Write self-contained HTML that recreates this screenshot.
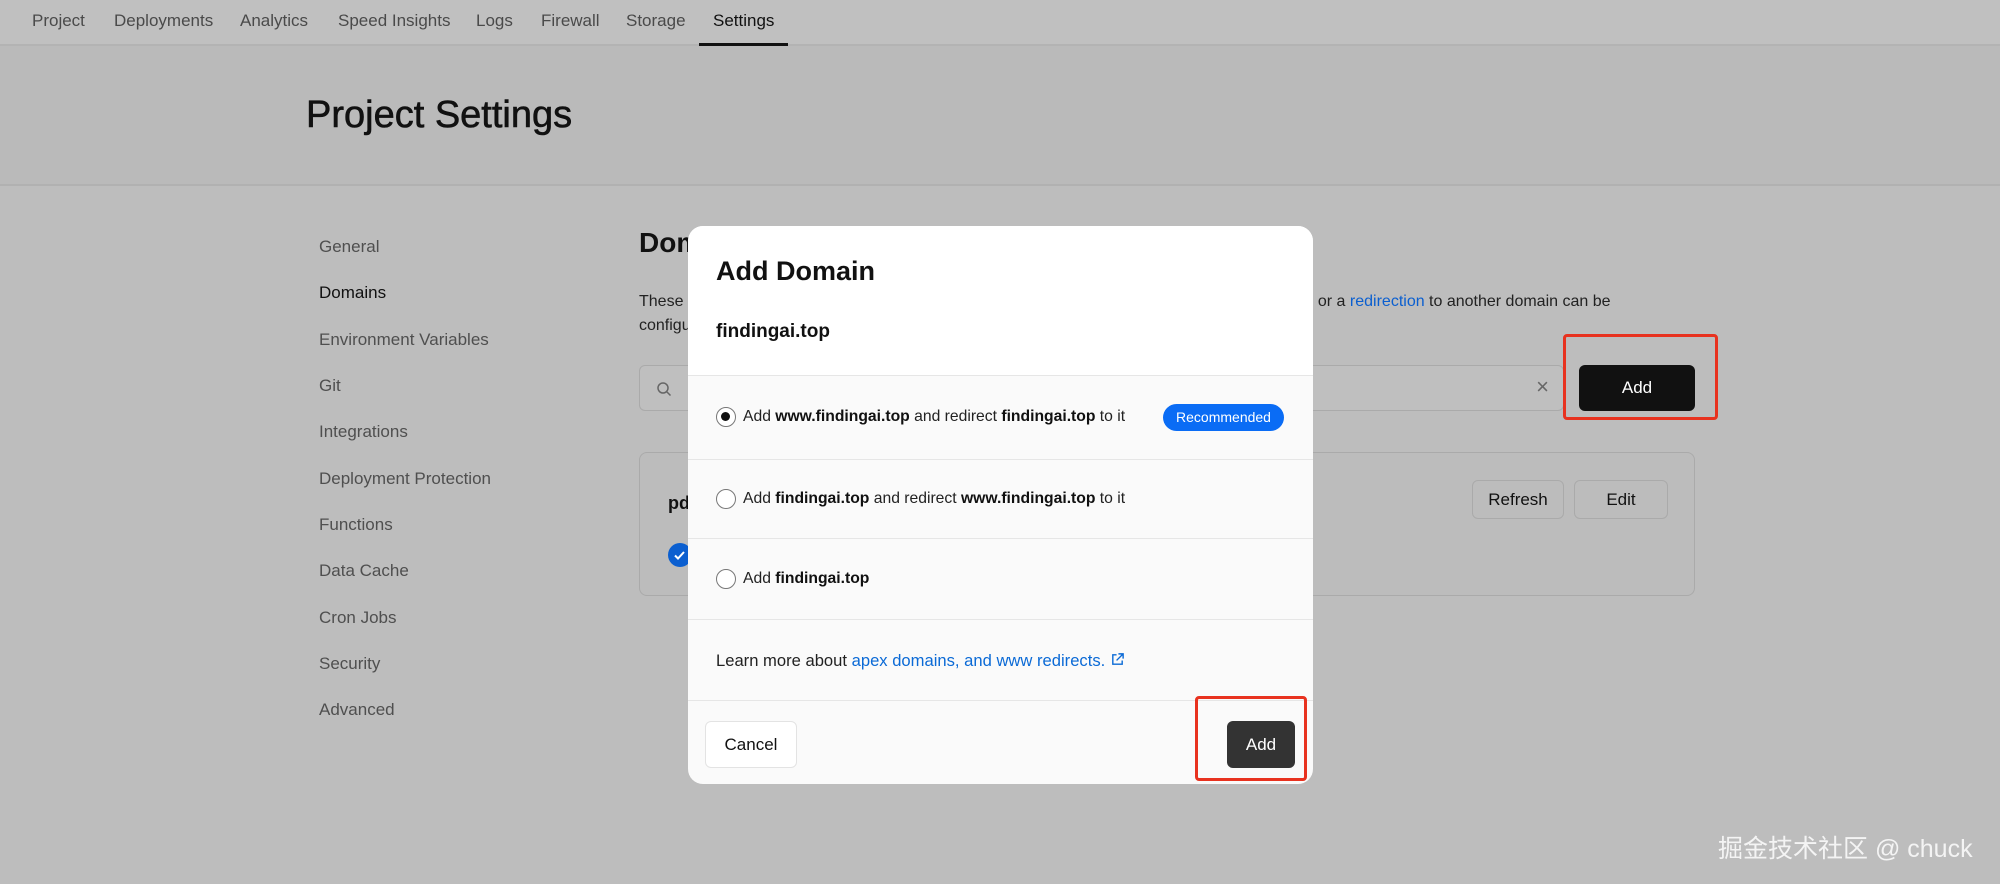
<!DOCTYPE html>
<html><head><meta charset="utf-8"><style>
*{box-sizing:border-box;margin:0;padding:0}
body{width:2000px;height:884px;overflow:hidden;background:#bdbdbd;font-family:"Liberation Sans",sans-serif;color:#111;position:relative}
.a{position:absolute;white-space:nowrap}
.nav{left:0;top:0;width:2000px;height:46px;background:#c0c0c0;border-bottom:2px solid #b3b3b3}
.nav span{position:absolute;top:11px;font-size:17px;color:#4a4a4a}
.hdr{left:0;top:46px;width:2000px;height:140px;background:#bababa;border-bottom:2px solid #b1b1b1}
.side{font-size:17px;color:#4f4f4f}
.modal{left:688px;top:226px;width:625px;height:558px;background:#fafafa;border-radius:15px;overflow:hidden}
.row{position:absolute;left:0;width:625px;border-top:1px solid #e6e6e6}
.radio{position:absolute;left:28px;width:20px;height:20px;border:1.5px solid #777;border-radius:50%;background:#fff}
.rt{position:absolute;left:55px;font-size:15.7px;color:#222}
b{font-weight:700;color:#111}
.red{border:3px solid #e8321f;border-radius:4px}
</style></head><body>
<div class="a nav">
<span style="left:32px">Project</span><span style="left:114px">Deployments</span><span style="left:240px">Analytics</span><span style="left:338px">Speed Insights</span><span style="left:476px">Logs</span><span style="left:541px">Firewall</span><span style="left:626px">Storage</span><span style="left:713px;color:#111">Settings</span>
<div style="position:absolute;left:699px;top:43px;width:89px;height:3px;background:#111"></div>
</div>
<div class="a hdr"><div class="a" style="left:306px;top:48px;font-size:38px;color:#111;-webkit-text-stroke:0.6px #111">Project Settings</div></div>
<div class="a side" style="left:319px;top:237px">General</div>
<div class="a side" style="left:319px;top:283px;color:#111">Domains</div>
<div class="a side" style="left:319px;top:330px">Environment Variables</div>
<div class="a side" style="left:319px;top:376px">Git</div>
<div class="a side" style="left:319px;top:422px">Integrations</div>
<div class="a side" style="left:319px;top:469px">Deployment Protection</div>
<div class="a side" style="left:319px;top:515px">Functions</div>
<div class="a side" style="left:319px;top:561px">Data Cache</div>
<div class="a side" style="left:319px;top:608px">Cron Jobs</div>
<div class="a side" style="left:319px;top:654px">Security</div>
<div class="a side" style="left:319px;top:700px">Advanced</div>
<div class="a" style="left:639px;top:227px;font-size:28px;font-weight:700">Domains</div>
<div class="a" style="left:639px;top:293px;font-size:16px;color:#222">These domains are assigned to your Production Deployments. Optionally, a different Git <span style="color:#0b5fd0">branch</span> or a <span style="color:#0b5fd0">redirection</span> to another domain can be</div>
<div class="a" style="left:639px;top:317px;font-size:16px;color:#222">configured for each one.</div>
<div class="a" style="left:639px;top:365px;width:925px;height:46px;border:1px solid #aaa;border-radius:6px;background:#bfbfbf">
<svg class="a" style="left:16px;top:15px" width="16" height="16" viewBox="0 0 16 16" fill="none" stroke="#666" stroke-width="1.5"><circle cx="7" cy="7" r="5"/><path d="M11 11l3.5 3.5"/></svg>
<span class="a" style="right:14px;top:8px;font-size:22px;color:#666">×</span></div>
<div class="a" style="left:1579px;top:365px;width:116px;height:46px;background:#111;border-radius:6px;color:#fff;font-size:17px;text-align:center;line-height:46px">Add</div>
<div class="a red" style="left:1563px;top:334px;width:155px;height:86px"></div>
<div class="a" style="left:639px;top:452px;width:1056px;height:144px;border:1px solid #aaa;border-radius:8px;background:#bcbcbc">
<div class="a" style="left:28px;top:40px;font-size:18px;font-weight:700">pdf.findingai.top</div>
<div class="a" style="left:28px;top:90px;width:24px;height:24px;border-radius:50%;background:#0b5fd0"><svg width="24" height="24" viewBox="0 0 24 24" fill="none" stroke="#fff" stroke-width="2"><path d="M7 12.5l3 3 6-6.5"/></svg></div>
<div class="a" style="left:832px;top:27px;width:92px;height:39px;border:1px solid #aaa;border-radius:6px;font-size:17px;text-align:center;line-height:37px">Refresh</div>
<div class="a" style="left:934px;top:27px;width:94px;height:39px;border:1px solid #aaa;border-radius:6px;font-size:17px;text-align:center;line-height:37px">Edit</div>
</div>
<div class="a modal">
<div style="position:absolute;left:0;top:0;width:625px;height:149px;background:#fff"></div>
<div class="a" style="left:28px;top:30px;font-size:27px;font-weight:700">Add Domain</div>
<div class="a" style="left:28px;top:95px;font-size:19px;font-weight:700">findingai.top</div>
<div class="row" style="top:149px;height:84px"><div class="radio" style="top:31px"><div style="position:absolute;left:4px;top:4px;width:9px;height:9px;border-radius:50%;background:#111"></div></div><div class="rt" style="top:32px">Add <b>www.findingai.top</b> and redirect <b>findingai.top</b> to it</div>
<div class="a" style="left:475px;top:28px;width:121px;height:27px;border-radius:14px;background:#0a6cf5;color:#fff;font-size:14px;text-align:center;line-height:27px">Recommended</div></div>
<div class="row" style="top:233px;height:79px"><div class="radio" style="top:29px"></div><div class="rt" style="top:30px">Add <b>findingai.top</b> and redirect <b>www.findingai.top</b> to it</div></div>
<div class="row" style="top:312px;height:81px"><div class="radio" style="top:30px"></div><div class="rt" style="top:31px">Add <b>findingai.top</b></div></div>
<div class="row" style="top:393px;height:81px"><div class="a" style="left:28px;top:31px;font-size:16.6px;color:#222">Learn more about <span style="color:#0b6ad6">apex domains, and www redirects.</span> <svg width="15" height="15" viewBox="0 0 16 16" fill="none" stroke="#0b6ad6" stroke-width="1.5" style="vertical-align:-1px"><path d="M7 3H3v10h10V9M9 2h5v5M14 2L7 9"/></svg></div></div>
<div class="row" style="top:474px;height:84px">
<div class="a" style="left:17px;top:20px;width:92px;height:47px;background:#fff;border:1px solid #e3e3e3;border-radius:6px;font-size:17px;text-align:center;line-height:45px">Cancel</div>
<div class="a" style="left:539px;top:20px;width:68px;height:47px;background:#333;border-radius:6px;color:#fff;font-size:17px;text-align:center;line-height:47px">Add</div>
</div>
</div>
<div class="a red" style="left:1195px;top:696px;width:112px;height:85px"></div>
<div class="a" style="left:1718px;top:829px;font-size:25px;color:#f4f4f4;font-family:'Liberation Sans','Noto Sans CJK SC',sans-serif">掘金技术社区 @ chuck</div>
</body></html>
